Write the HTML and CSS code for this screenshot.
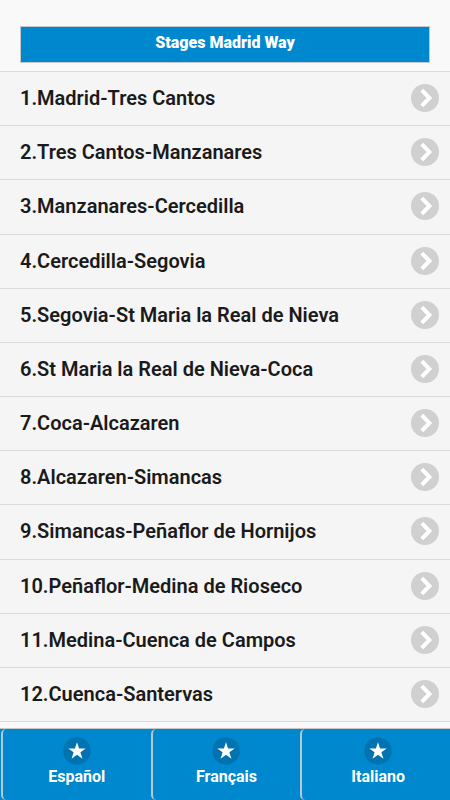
FILE: index.html
```html
<!DOCTYPE html>
<html lang="en">
<head>
<meta charset="utf-8">
<meta name="viewport" content="width=device-width, initial-scale=1">
<title>Stages Madrid Way</title>
<link rel="stylesheet" href="styles.css">
</head>
<body>
<svg class="sprite" aria-hidden="true">
  <symbol id="chevron" viewBox="0 0 28 28"><circle cx="14" cy="14" r="14" fill="#d0d0d0"/><path d="M10.8 6.2 18.4 14l-7.6 7.8" fill="none" stroke="#fff" stroke-width="4"/></symbol>
  <symbol id="star" viewBox="0 0 28 28"><circle cx="14" cy="14" r="13.7" fill="#0073b0"/><path d="M14 5.2l2.1 6.2h6.6l-5.3 3.9 2 6.4-5.4-3.9-5.4 3.9 2-6.4-5.3-3.9h6.6z" fill="#fff"/></symbol>
</svg>
<header class="header"><h1 class="title">Stages Madrid Way</h1></header>
<main class="main">
  <ul class="stages">
    <li><a class="stage" href="#1">1.Madrid-Tres Cantos<svg class="icon"><use href="#chevron"/></svg></a></li>
    <li><a class="stage" href="#2">2.Tres Cantos-Manzanares<svg class="icon"><use href="#chevron"/></svg></a></li>
    <li><a class="stage" href="#3">3.Manzanares-Cercedilla<svg class="icon"><use href="#chevron"/></svg></a></li>
    <li><a class="stage" href="#4">4.Cercedilla-Segovia<svg class="icon"><use href="#chevron"/></svg></a></li>
    <li><a class="stage" href="#5">5.Segovia-St Maria la Real de Nieva<svg class="icon"><use href="#chevron"/></svg></a></li>
    <li><a class="stage" href="#6">6.St Maria la Real de Nieva-Coca<svg class="icon"><use href="#chevron"/></svg></a></li>
    <li><a class="stage" href="#7">7.Coca-Alcazaren<svg class="icon"><use href="#chevron"/></svg></a></li>
    <li><a class="stage" href="#8">8.Alcazaren-Simancas<svg class="icon"><use href="#chevron"/></svg></a></li>
    <li><a class="stage" href="#9">9.Simancas-Peñaflor de Hornijos<svg class="icon"><use href="#chevron"/></svg></a></li>
    <li><a class="stage" href="#10">10.Peñaflor-Medina de Rioseco<svg class="icon"><use href="#chevron"/></svg></a></li>
    <li><a class="stage" href="#11">11.Medina-Cuenca de Campos<svg class="icon"><use href="#chevron"/></svg></a></li>
    <li><a class="stage" href="#12">12.Cuenca-Santervas<svg class="icon"><use href="#chevron"/></svg></a></li>
  </ul>
</main>
<nav class="languages" aria-label="Language">
  <a class="language" href="#es" lang="es"><svg class="icon"><use href="#star"/></svg>Español</a>
  <a class="language" href="#fr" lang="fr"><svg class="icon"><use href="#star"/></svg>Français</a>
  <a class="language" href="#it" lang="it"><svg class="icon"><use href="#star"/></svg>Italiano</a>
</nav>
</body>
</html>
```
FILE: styles.css
```css
* { box-sizing: border-box; }

body {
  display: flex;
  flex-direction: column;
  min-height: 100vh;
  margin: 0;
  background: #f9f9f9;
  color: #1a1a1a;
  font-family: Roboto, "Liberation Sans", sans-serif;
}

a { color: inherit; text-decoration: none; }

.sprite { display: none; }

.icon { flex: none; width: 28px; height: 28px; }

.header { padding: 26px 20px 8px; }

.title {
  margin: 0;
  padding: 4px 6px 8px;
  border: 1px solid #c4c8cc;
  background: #0088ce;
  color: #fff;
  font-size: 16px;
  font-weight: 900;
  line-height: 23px;
  text-align: center;
}

.main {
  display: flex;
  flex: 1;
  padding-bottom: 6px;
}

.stages {
  display: grid;
  flex: 1;
  grid-auto-rows: 1fr;
  margin: 0;
  padding: 0;
  border-bottom: 1px solid #dadada;
  background: #f5f5f5;
  list-style: none;
}

.stage {
  display: flex;
  align-items: center;
  justify-content: space-between;
  height: 100%;
  padding: 0 11px 1px 20px;
  border-top: 1px solid #dadada;
  font-size: 20px;
  font-weight: 600;
  line-height: 26px;
}

.languages {
  display: grid;
  grid-template-columns: 1fr 1fr 1fr;
  padding-left: 1px;
  border-top: 1px solid #c4c8cc;
  background: #0088ce;
}

.language {
  display: flex;
  flex-direction: column;
  align-items: center;
  padding: 8px 0 12px;
  border-left: 2px solid #bac6d0;
  border-radius: 5px;
  color: #fff;
  font-size: 16px;
  font-weight: 700;
  line-height: 23px;
}

.language:last-child { padding-left: 4px; }
```
